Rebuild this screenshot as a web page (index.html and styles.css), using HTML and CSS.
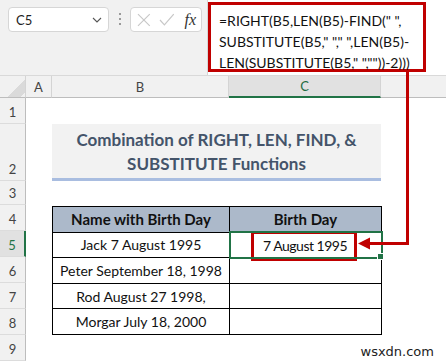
FILE: index.html
```html
<!DOCTYPE html>
<html lang="en">
  <head>
    <meta charset="UTF-8" />
    <title>RIGHT LEN FIND SUBSTITUTE</title>
    <link rel="stylesheet" href="styles.css">
  </head>
  <body>
    <div class="app">
      <!-- formula bar -->
      <div class="formula-area">
        <div class="name-box">
          <span>C5</span>
          <svg width="10" height="6" viewBox="0 0 10 6"><path d="M1 1 L5 5 L9 1" fill="none" stroke="#555" stroke-width="1.1"/></svg>
        </div>
        <div class="dots"><i></i><i></i><i></i></div>
        <div class="fx-box">
          <svg width="14" height="14" viewBox="0 0 14 14"><path d="M1 1 L13 13 M13 1 L1 13" stroke="#c8c8c8" stroke-width="1.2"/></svg>
          <svg width="16" height="13" viewBox="0 0 16 13"><path d="M1 7 L5.5 12 L15 1" fill="none" stroke="#c8c8c8" stroke-width="1.2"/></svg>
          <span class="fx">fx</span>
        </div>
        <div class="formula-bar">
          <div class="formula">=RIGHT(B5,LEN(B5)-FIND(" ",<br>SUBSTITUTE(B5," "," ",LEN(B5)-<br>LEN(SUBSTITUTE(B5," ",""))-2)))</div>
        </div>
      </div>

      <!-- worksheet -->
      <div class="sheet">
        <div class="corner"></div>
        <div class="col-head">A</div>
        <div class="col-head">B</div>
        <div class="col-head active">C</div>
        <div class="col-head last"></div>

        <div class="row-head r1">1</div>
        <div class="row-head r2">2</div>
        <div class="row-head r3">3</div>
        <div class="row-head r4">4</div>
        <div class="row-head r5 active">5</div>
        <div class="row-head r6">6</div>
        <div class="row-head r7">7</div>
        <div class="row-head r8">8</div>
        <div class="row-head r9">9</div>

        <div class="title">Combination of RIGHT, LEN, FIND, &amp;<br>SUBSTITUTE Functions</div>

        <table class="data">
          <tr><th>Name with Birth Day</th><th>Birth Day</th></tr>
          <tr><td>Jack 7 August 1995</td><td class="selected"><span class="result">7 August 1995</span><i class="handle"></i></td></tr>
          <tr><td>Peter September 18, 1998</td><td></td></tr>
          <tr><td>Rod August 27 1998,</td><td></td></tr>
          <tr><td>Morgar July 18, 2000</td><td></td></tr>
        </table>

        <div class="watermark">wsxdn.com</div>
      </div>

      <!-- callout arrow -->
      <svg class="arrow" width="446" height="361" viewBox="0 0 446 361">
        <path d="M407.5 72 V243.5 H368" fill="none" stroke="#c00000" stroke-width="3"/>
        <path d="M358 243.5 L370 237.5 L370 249.5 Z" fill="#c00000"/>
      </svg>
    </div>
  </body>
</html>
```

FILE: styles.css
```css
body {
  margin: 0;
  font-family: Lato, "Open Sans", sans-serif;
  background: #fff;
}
.app {
  position: relative;
  width: 446px;
  height: 361px;
  overflow: hidden;
}
.formula-area {
  display: flex;
  height: 76px;
  background: #f1f1f1;
  border-bottom: 1px solid #d9d9d9;
  box-sizing: border-box;
}
.name-box {
  display: flex;
  align-items: center;
  justify-content: space-between;
  width: 101px;
  height: 25px;
  margin: 7px 0 0 8px;
  padding: 0 6px 0 7px;
  box-sizing: border-box;
  background: #fff;
  border: 1px solid #d6d6d6;
  border-radius: 4px;
  font-size: 13px;
  color: #222;
}
.dots {
  display: flex;
  flex-direction: column;
  gap: 3px;
  margin: 13px 9px 0 10px;
}
.dots i {
  width: 2px;
  height: 2px;
  background: #9a9a9a;
}
.fx-box {
  display: flex;
  align-items: center;
  gap: 8px;
  width: 72px;
  height: 25px;
  margin-top: 7px;
  padding: 0 5px 0 6px;
  box-sizing: border-box;
  background: #fff;
  border: 1px solid #d6d6d6;
  border-radius: 4px;
}
.fx {
  font-family: "Liberation Serif", serif;
  font-style: italic;
  font-size: 16px;
  color: #333;
  margin-left: 2px;
}
.formula-bar {
  flex: 1;
  margin-left: 5px;
  background: #fff;
  border-left: 1px solid #d6d6d6;
}
.formula {
  width: 218px;
  height: 70px;
  margin-top: 2px;
  padding: 5px 0 0 8px;
  box-sizing: border-box;
  border: 3px solid #c00000;
  font-size: 14px;
  line-height: 21px;
  color: #111;
  white-space: pre;
}
.sheet {
  display: grid;
  grid-template-columns: 26px 26px 177px 152px 1fr;
  grid-template-rows: 22px 26px 57px 24px 26px 26px 26px 26px 26px 26px;
  font-size: 14px;
  color: #111;
}
.corner {
  background: #f1f1f1 linear-gradient(135deg, transparent 62%, #dadada 62%, #dadada 90%, transparent 90%);
  border-right: 1px solid #d4d4d4;
  border-bottom: 1px solid #bdbdbd;
}
.col-head {
  background: #f1f1f1;
  border-right: 1px solid #d4d4d4;
  border-bottom: 1px solid #bdbdbd;
  font-size: 13px;
  color: #444;
  text-align: center;
  line-height: 22px;
}
.col-head.active {
  background: #e1e1e1;
  color: #1e6b40;
  border-bottom: 2px solid #217346;
  line-height: 21px;
}
.col-head.last {
  border-right: none;
}
.row-head {
  grid-column: 1;
  background: #f1f1f1;
  border-right: 1px solid #bdbdbd;
  border-bottom: 1px solid #dcdcdc;
  font-size: 13px;
  color: #444;
  display: flex;
  align-items: flex-end;
  justify-content: center;
  padding-bottom: 3px;
  box-sizing: border-box;
}
.row-head.active {
  background: #e1e1e1;
  color: #217346;
  border-right: 2px solid #217346;
}
.r1 { grid-row: 2; }
.r2 { grid-row: 3; }
.r3 { grid-row: 4; }
.r4 { grid-row: 5; }
.r5 { grid-row: 6; }
.r6 { grid-row: 7; }
.r7 { grid-row: 8; }
.r8 { grid-row: 9; }
.r9 { grid-row: 10; }
.title {
  grid-column: 3 / 5;
  grid-row: 3;
  background: #f2f2f2;
  border-bottom: 3px solid #a9bde0;
  color: #44546a;
  font-weight: bold;
  font-size: 17px;
  line-height: 24px;
  text-align: center;
  display: flex;
  align-items: flex-end;
  justify-content: center;
  padding-bottom: 2px;
  box-sizing: border-box;
}
.data {
  grid-column: 3 / 5;
  grid-row: 5 / 10;
  border-collapse: collapse;
  width: 330px;
  margin-top: 1px;
  table-layout: fixed;
}
.data th,
.data td {
  border: 1px solid #000;
  height: 25px;
  padding: 0;
  text-align: center;
  box-sizing: border-box;
}
.data th {
  background: #acb9ca;
  font-weight: bold;
  font-size: 15px;
}
.data th:first-child {
  width: 177px;
}
.data td.selected {
  position: relative;
  outline: 2px solid #217346;
  outline-offset: -1px;
}
.result {
  display: inline-block;
  padding: 4px 7px 4px 9px;
  border: 3px solid #c00000;
  margin: -6px 0 -6px -3px;
  font-size: 14px;
  line-height: 16px;
  vertical-align: middle;
  letter-spacing: -0.5px;
}
.handle {
  position: absolute;
  right: -3px;
  bottom: -3px;
  width: 5px;
  height: 5px;
  background: #217346;
  border: 1px solid #fff;
}
.watermark {
  grid-column: 4 / 6;
  grid-row: 10;
  justify-self: end;
  align-self: end;
  margin: 0 12px 2px 0;
  font-family: "DejaVu Sans", sans-serif;
  font-size: 13px;
  color: #222;
}
.arrow {
  position: absolute;
  left: 0;
  top: 0;
  pointer-events: none;
}
```
